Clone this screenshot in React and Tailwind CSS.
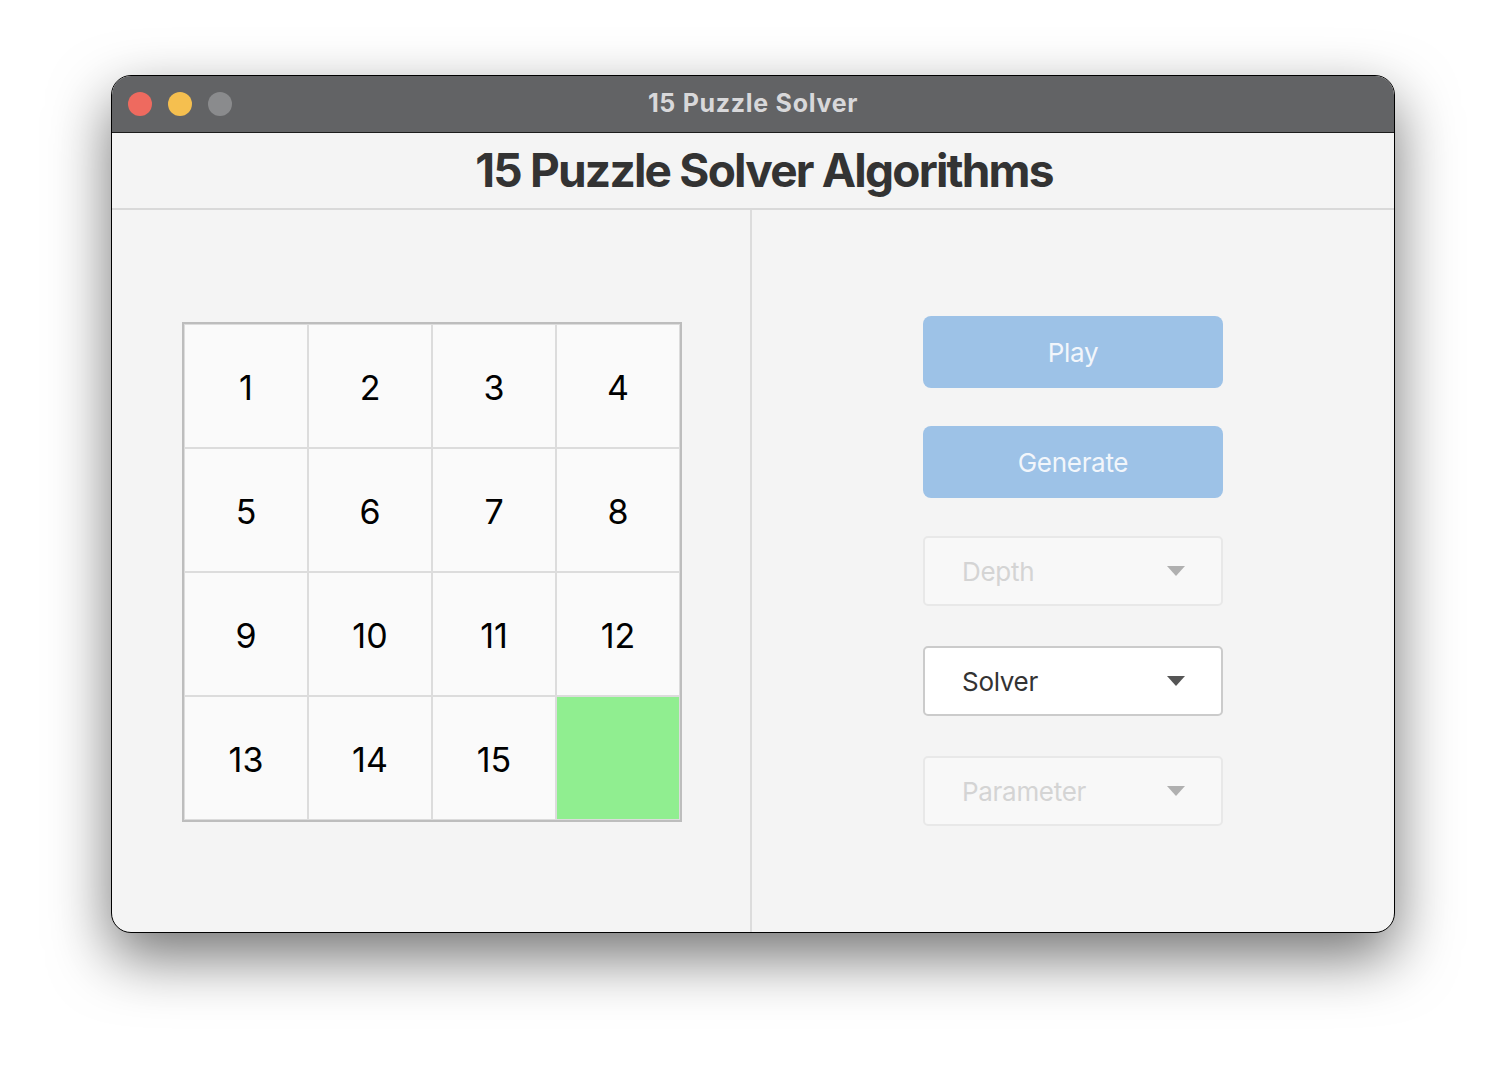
import React from "react";

const tiles = [1, 2, 3, 4, 5, 6, 7, 8, 9, 10, 11, 12, 13, 14, 15, 0];

const Caret = ({ color }) => (
  <svg width="18" height="10" viewBox="0 0 18 10" className="shrink-0">
    <path d="M0 0 L18 0 L9 10 Z" fill={color} />
  </svg>
);

const SelectBox = ({ label, disabled }) => (
  <div
    className={
      disabled
        ? "flex h-[70px] w-[300px] items-center justify-between rounded-[5px] border-2 border-[#e8e8e8] bg-[#f8f8f8] pl-[37px] pr-[36px] text-[26px] tracking-[-0.3px] text-[#d4d4d4]"
        : "flex h-[70px] w-[300px] items-center justify-between rounded-[5px] border-2 border-[#cbcbcb] bg-white pl-[37px] pr-[36px] text-[26px] tracking-[-0.3px] text-[#333]"
    }
  >
    <span>{label}</span>
    <Caret color={disabled ? "#b0b0b0" : "#555"} />
  </div>
);

export default function App() {
  return (
    <div
      className="min-h-[1080px] bg-white pt-[75px] pl-[111px]"
      style={{ fontFamily: "Inter, 'Noto Sans', sans-serif" }}
    >
      <div className="flex h-[858px] w-[1284px] flex-col overflow-hidden rounded-[20px] border border-black bg-[#f4f4f4] shadow-[0_24px_60px_rgba(0,0,0,0.55)]">
        {/* title bar */}
        <div className="relative flex h-[57px] shrink-0 items-center border-b border-[#1c1c1c] bg-[#626365]">
          <div className="flex gap-[16px] pl-[16px]">
            <div className="h-[24px] w-[24px] rounded-full bg-[#ee6a5f]" />
            <div className="h-[24px] w-[24px] rounded-full bg-[#f5bf4f]" />
            <div className="h-[24px] w-[24px] rounded-full bg-[#8a8b8d]" />
          </div>
          <div className="absolute inset-0 flex items-center justify-center text-[25px] font-bold tracking-[0.7px] text-[#d8d8da]">
            15 Puzzle Solver
          </div>
        </div>

        {/* header */}
        <div className="flex h-[77px] shrink-0 items-center justify-center border-b-2 border-[#d9d9d9] pl-[22px]">
          <h1 className="text-[46px] font-bold tracking-[-1.8px] text-[#333]">
            15 Puzzle Solver Algorithms
          </h1>
        </div>

        {/* body */}
        <div className="flex flex-1">
          <div className="flex w-[640px] items-center justify-center border-r-2 border-[#dcdcdc] pl-[2px] pt-[2px]">
            <div className="grid w-[500px] grid-cols-4 border-2 border-[#bdbdbd]">
              {tiles.map((n, i) =>
                n === 0 ? (
                  <div key={i} className="h-[124px] border border-[#dcdcdc] bg-[#90ee90]" />
                ) : (
                  <div
                    key={i}
                    className="flex h-[124px] items-center justify-center border border-[#dcdcdc] bg-[#fafafa] pt-[3px] text-[34px] text-black"
                  >
                    {n}
                  </div>
                )
              )}
            </div>
          </div>

          <div className="flex flex-1 flex-col items-center justify-center">
            <button className="flex h-[72px] w-[300px] items-center justify-center rounded-[8px] bg-[#9dc2e7] text-[26px] tracking-[-0.3px] text-[#f2f6fb]">
              Play
            </button>
            <button className="mt-[38px] flex h-[72px] w-[300px] items-center justify-center rounded-[8px] bg-[#9dc2e7] text-[26px] tracking-[-0.3px] text-[#f2f6fb]">
              Generate
            </button>
            <div className="mt-[38px]">
              <SelectBox label="Depth" disabled />
            </div>
            <div className="mt-[40px]">
              <SelectBox label="Solver" />
            </div>
            <div className="mt-[40px]">
              <SelectBox label="Parameter" disabled />
            </div>
          </div>
        </div>
      </div>
    </div>
  );
}
